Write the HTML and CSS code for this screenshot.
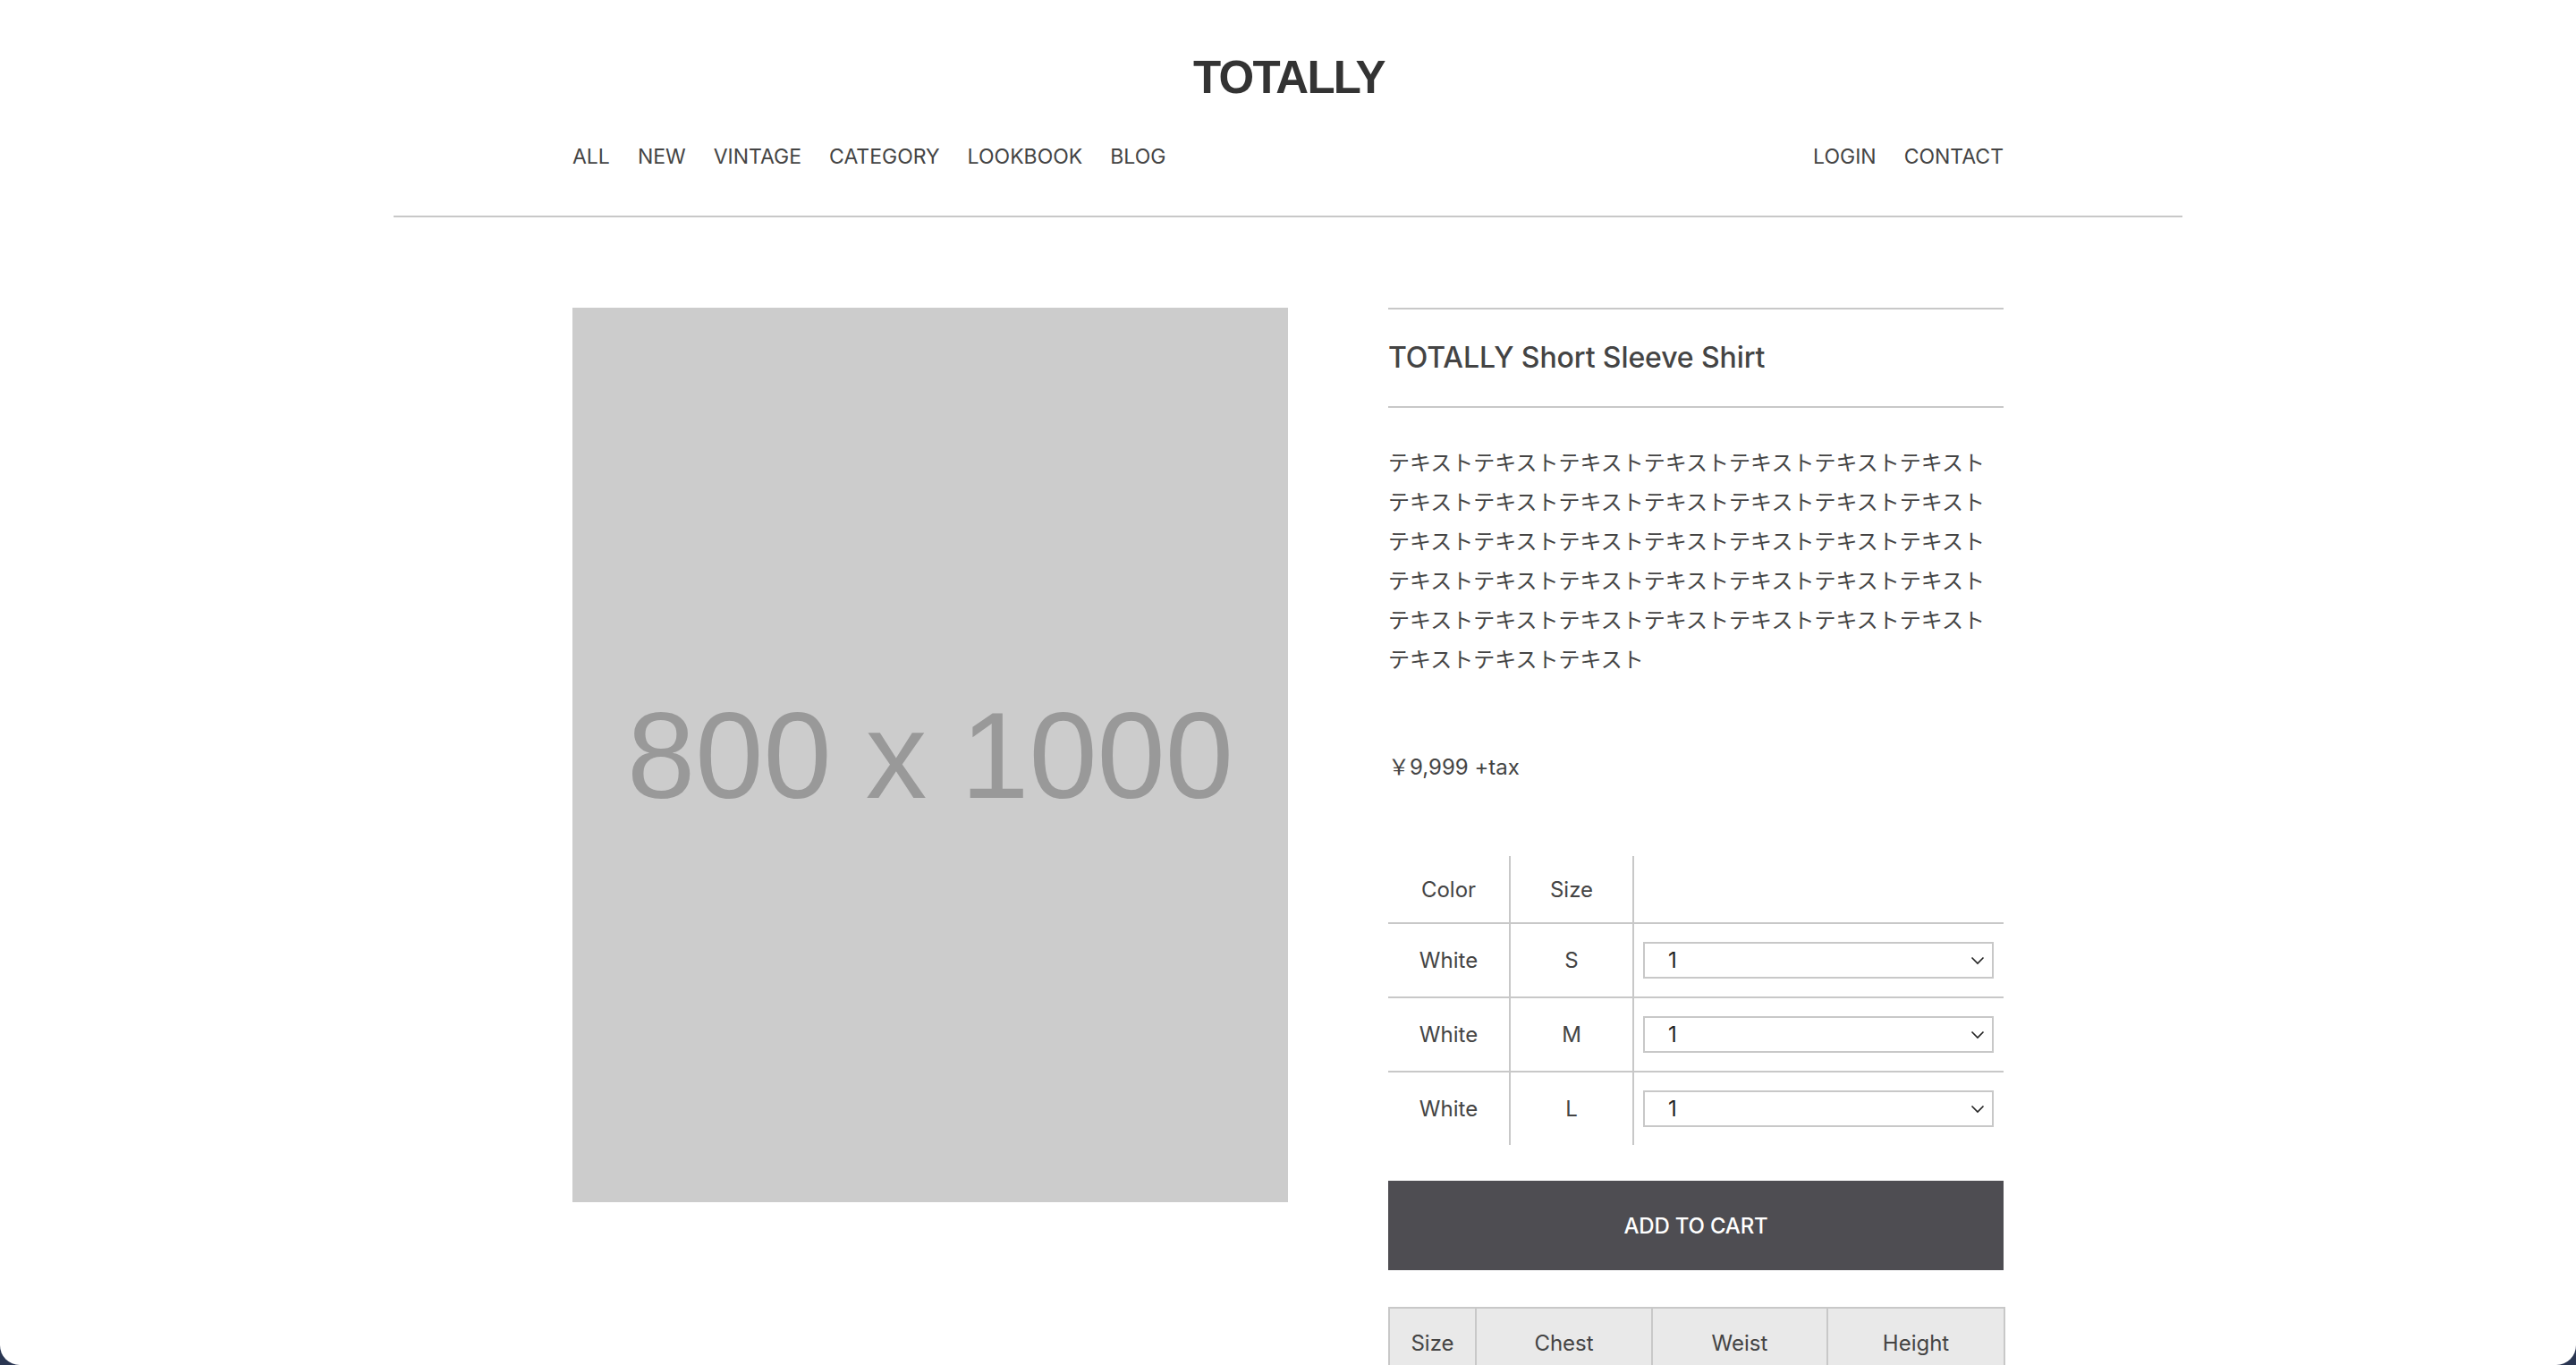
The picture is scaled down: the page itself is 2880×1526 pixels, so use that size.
FILE: index.html
```html
<!DOCTYPE html>
<html lang="ja">
<head>
<meta charset="utf-8">
<title>TOTALLY Short Sleeve Shirt</title>
<link rel="stylesheet" href="styles.css">
</head>
<body>
<div class="window">
  <header class="header">
    <h1 class="logo">TOTALLY</h1>
    <nav class="nav">
      <ul class="nav-list">
        <li>ALL</li>
        <li>NEW</li>
        <li>VINTAGE</li>
        <li>CATEGORY</li>
        <li>LOOKBOOK</li>
        <li>BLOG</li>
      </ul>
      <ul class="nav-list">
        <li>LOGIN</li>
        <li>CONTACT</li>
      </ul>
    </nav>
  </header>

  <main class="main">
    <div class="photo">800 x 1000</div>

    <section class="info">
      <h2 class="title">TOTALLY Short Sleeve Shirt</h2>
      <p class="desc">テキストテキストテキストテキストテキストテキストテキストテキストテキストテキストテキストテキストテキストテキストテキストテキストテキストテキストテキストテキストテキストテキストテキストテキストテキストテキストテキストテキストテキストテキストテキストテキストテキストテキストテキストテキストテキストテキスト</p>
      <p class="price">￥9,999 +tax</p>

      <table class="variants">
        <colgroup><col class="c1"><col class="c2"><col class="c3"></colgroup>
        <tr class="vhead"><th>Color</th><th>Size</th><th></th></tr>
        <tr><td>White</td><td>S</td><td class="qty"><div class="select-wrap"><select class="select"><option>1</option><option>2</option><option>3</option></select><svg class="chev" viewBox="0 0 16 10" width="16" height="10"><path d="M1.5 1.5 L8 8 L14.5 1.5" fill="none" stroke="#222" stroke-width="1.6"/></svg></div></td></tr>
        <tr><td>White</td><td>M</td><td class="qty"><div class="select-wrap"><select class="select"><option>1</option><option>2</option><option>3</option></select><svg class="chev" viewBox="0 0 16 10" width="16" height="10"><path d="M1.5 1.5 L8 8 L14.5 1.5" fill="none" stroke="#222" stroke-width="1.6"/></svg></div></td></tr>
        <tr><td>White</td><td>L</td><td class="qty"><div class="select-wrap"><select class="select"><option>1</option><option>2</option><option>3</option></select><svg class="chev" viewBox="0 0 16 10" width="16" height="10"><path d="M1.5 1.5 L8 8 L14.5 1.5" fill="none" stroke="#222" stroke-width="1.6"/></svg></div></td></tr>
      </table>

      <button class="cart" type="button">ADD TO CART</button>

      <table class="sizes">
        <colgroup><col class="s1"><col class="s2"><col class="s3"><col class="s4"></colgroup>
        <tr><th>Size</th><th>Chest</th><th>Weist</th><th>Height</th></tr>
      </table>
    </section>
  </main>
</div>
</body>
</html>
```

FILE: styles.css
```css
html, body {
  margin: 0;
  padding: 0;
}

body {
  background: #2a3652;
}

.window {
  height: 100vh;
  background: #ffffff;
  border-radius: 0 0 22px 22px;
  overflow: hidden;
  font-family: Inter, "Noto Sans CJK JP", sans-serif;
  color: #444444;
}

/* header */
.header {
  width: 2000px;
  margin: 0 auto;
  padding-top: 61px;
  border-bottom: 2px solid #c8c8c8;
}

.logo {
  margin: 0;
  text-align: center;
  font-family: "Liberation Sans", Arial, sans-serif;
  font-weight: 700;
  font-size: 51px;
  line-height: 51px;
  letter-spacing: -1.7px;
  padding-left: 2px;
  color: #333333;
}

.nav {
  width: 1600px;
  margin: 48px auto 0;
  padding-bottom: 51px;
  display: flex;
  justify-content: space-between;
}

.nav-list {
  list-style: none;
  margin: 0;
  padding: 0;
  display: flex;
  gap: 31px;
  font-size: 23px;
  line-height: 30px;
  color: #444444;
}

/* main */
.main {
  width: 1600px;
  margin: 0 auto;
  padding-top: 101px;
  display: flex;
  gap: 112px;
}

.photo {
  flex: none;
  width: 800px;
  height: 1000px;
  background: #cccccc;
  display: flex;
  align-items: center;
  justify-content: center;
  font-family: "Liberation Sans", Arial, sans-serif;
  font-size: 137px;
  color: #999999;
}

.info {
  flex: none;
  width: 688px;
}

.title {
  margin: 0;
  border-top: 2px solid #c8c8c8;
  border-bottom: 2px solid #c8c8c8;
  font-size: 32px;
  font-weight: 500;
  line-height: 108px;
  color: #444444;
  letter-spacing: -0.1px;
}

.desc {
  margin: 40px 0 0;
  font-size: 24px;
  line-height: 44px;
  color: #444444;
  word-break: break-all;
}

.price {
  margin: 76px 0 0;
  font-size: 24px;
  line-height: 44px;
  color: #444444;
}

/* variants */
.variants {
  margin-top: 77px;
  width: 688px;
  border-collapse: collapse;
  table-layout: fixed;
  font-size: 24px;
  color: #444444;
}

.variants .c1 { width: 136px; }
.variants .c2 { width: 138px; }
.variants .c3 { width: 414px; }

.variants th,
.variants td {
  padding: 0;
  text-align: center;
  font-weight: 400;
}

.variants th + th,
.variants td + td {
  border-left: 2px solid #c8c8c8;
}

.variants .vhead th {
  height: 74px;
}

.variants tr + tr td {
  border-top: 2px solid #c8c8c8;
  height: 81px;
}

.variants td.qty {
  padding: 0 11px 0 10px;
  text-align: left;
}

.select-wrap {
  position: relative;
  height: 41px;
}

.select {
  -webkit-appearance: none;
  appearance: none;
  box-sizing: border-box;
  width: 100%;
  height: 41px;
  margin: 0;
  padding: 0 0 0 26px;
  border: 2px solid #c8c8c8;
  border-radius: 0;
  background: #ffffff;
  font-family: Inter, sans-serif;
  font-size: 24px;
  color: #222222;
  outline: none;
}

.chev {
  position: absolute;
  right: 10px;
  top: 16px;
  width: 16px;
  height: 10px;
  pointer-events: none;
}

/* cart */
.cart {
  display: block;
  margin-top: 40px;
  width: 688px;
  height: 100px;
  border: none;
  background: #4e4d52;
  color: #ffffff;
  font-family: Inter, sans-serif;
  font-size: 24px;
  font-weight: 500;
  letter-spacing: -0.2px;
}

/* size chart */
.sizes {
  margin-top: 41px;
  width: 688px;
  border-collapse: collapse;
  table-layout: fixed;
  background: #e9e9e9;
  font-size: 24px;
  color: #444444;
}

.sizes .s1 { width: 97px; }
.sizes .s2 { width: 197px; }
.sizes .s3 { width: 196px; }
.sizes .s4 { width: 198px; }

.sizes th {
  height: 76px;
  border: 2px solid #c8c8c8;
  font-weight: 400;
  text-align: center;
  padding: 0;
}
```
